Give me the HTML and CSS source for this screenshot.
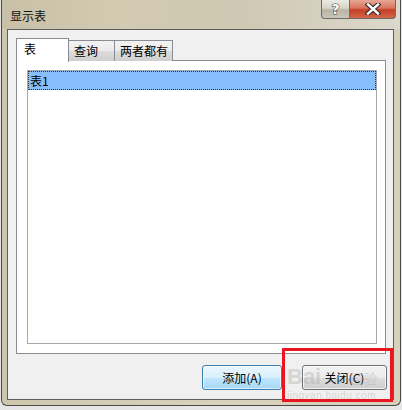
FILE: index.html
```html
<!DOCTYPE html>
<html lang="zh">
<head>
<meta charset="utf-8">
<link rel="stylesheet" href="styles.css">
</head>
<body>
<div class="window">
  <div class="titlebar">
    <span class="title">显示表</span>
    <div class="caption-buttons">
      <div class="cap help"><span>?</span></div>
      <div class="cap close">
        <svg width="16" height="12" viewBox="0 0 16 12">
          <path d="M3 1.5 L13 10.5 M13 1.5 L3 10.5" stroke="#3a2a26" stroke-width="4.6" stroke-linecap="square"/>
          <path d="M3 1.5 L13 10.5 M13 1.5 L3 10.5" stroke="#ffffff" stroke-width="2.4" stroke-linecap="square"/>
        </svg>
      </div>
    </div>
  </div>
  <div class="client">
    <div class="tabs">
      <div class="tab active">表</div>
      <div class="tab t2">查询</div>
      <div class="tab t3">两者都有</div>
    </div>
    <div class="panel">
      <div class="listbox">
        <div class="item selected">表1</div>
      </div>
    </div>
    <div class="actions">
      <button class="btn default">添加(A)</button>
      <button class="btn">关闭(C)</button>
    </div>
  </div>
</div>
<div class="watermark">
  <span class="wm-big">Bai</span><span class="wm-cn">经验</span>
  <span class="wm-small">jingyan.baidu.com</span>
</div>
<div class="annotation"></div>
</body>
</html>
```
FILE: styles.css
```css
html, body {
  margin: 0;
  padding: 0;
}
body {
  width: 402px;
  height: 410px;
  overflow: hidden;
  background: #e6e6e6;
  font-family: "Noto Sans CJK SC", "Noto Sans", sans-serif;
  font-size: 12px;
  color: #000;
  position: relative;
}
.window {
  margin-left: 1px;
  width: 398px;
  height: 405px;
  border: 1px solid #4a4a4a;
  border-top: none;
  border-radius: 0 0 6px 6px;
  background: linear-gradient(to right, #cfc7ac, #d8d1ba 50%, #d6d0bd);
  display: flex;
  flex-direction: column;
}
.titlebar {
  height: 29px;
  flex: none;
  display: flex;
  justify-content: space-between;
  align-items: flex-start;
  background: linear-gradient(to right, #c8c1a8 0%, #d2cab1 30%, #cfc8b2 60%, #dcd8cd 100%);
}
.title {
  margin-left: 8px;
  margin-top: 7px;
  line-height: 18px;
  font-size: 12px;
  color: #111;
}
.caption-buttons {
  display: flex;
  margin-right: 4px;
}
.cap {
  height: 19px;
  box-sizing: border-box;
  border: 1px solid #6d6a62;
  border-top: none;
  display: flex;
  align-items: center;
  justify-content: center;
}
.help {
  width: 28px;
  border-radius: 0 0 0 4px;
  border-right: none;
  background: linear-gradient(to bottom, #ebe9e1 0%, #d8d5ca 45%, #b8b4a6 55%, #c9c6ba 100%);
}
.help span {
  font-family: "DejaVu Sans", sans-serif;
  font-weight: bold;
  font-size: 14px;
  line-height: 14px;
  color: #fff;
  -webkit-text-stroke: 1px #3b3b3b;
  paint-order: stroke fill;
}
.close {
  width: 47px;
  border-radius: 0 0 4px 0;
  background: linear-gradient(to bottom, #e7a899 0%, #d9735d 45%, #c43f26 55%, #d3664b 100%);
}
.client {
  flex: 1;
  margin: 0 6px 5px 5px;
  border: 1px solid #5e5e5e;
  background: #f0f0f0;
  padding: 8px 6px 8px 8px;
  display: flex;
  flex-direction: column;
}
.tabs {
  display: flex;
  align-items: flex-end;
  height: 23px;
  position: relative;
  z-index: 1;
  margin-bottom: -1px;
}
.tab {
  box-sizing: border-box;
  height: 21px;
  border: 1px solid #898c95;
  border-bottom: none;
  background: linear-gradient(to bottom, #f2f2f2, #ebebeb 50%, #dddddd 51%, #cfcfcf);
  padding-left: 5px;
  line-height: 19px;
  font-size: 12px;
}
.tab + .tab { border-left: none; }
.tab.active {
  height: 24px;
  width: 53px;
  background: #fff;
  padding-left: 7px;
  line-height: 20px;
  margin-bottom: -1px;
}
.tab.t2 { width: 46px; }
.tab.t3 { width: 58px; }
.panel {
  box-sizing: border-box;
  width: 370px;
  height: 294px;
  border: 1px solid #898c95;
  background: #fff;
  padding: 9px 8px 9px 10px;
  display: flex;
}
.listbox {
  flex: 1;
  border: 1px solid #a5a7ad;
  background: #fff;
}
.item {
  height: 19px;
  box-sizing: border-box;
  line-height: 17px;
  padding-left: 1px;
  font-size: 12px;
}
.item.selected {
  background: #87bffd;
  border: 1px dotted #4b3010;
}
.actions {
  display: flex;
  justify-content: flex-end;
  gap: 20px;
  margin-top: 11px;
  padding-right: 0;
}
.btn {
  box-sizing: border-box;
  height: 25px;
  width: 80px;
  border: 1px solid #707070;
  border-radius: 3px;
  background: linear-gradient(to bottom, #f2f2f2 0%, #ebebeb 50%, #dddddd 51%, #cfcfcf 100%);
  font-family: "Noto Sans CJK SC", "Noto Sans", sans-serif;
  font-size: 12px;
  color: #000;
  padding: 0;
  box-shadow: inset 0 0 0 1px rgba(255,255,255,0.7);
}
.btn + .btn { width: 85px; }
.btn.default {
  border-color: #3c7fb1;
  background: linear-gradient(to bottom, #eaf6fd 0%, #d9f0fc 50%, #bee6fd 51%, #a7d9f5 100%);
  box-shadow: inset 0 0 0 1px rgba(255,255,255,0.6);
}
.watermark {
  position: absolute;
  left: 287px;
  top: 364px;
  width: 100px;
  color: rgba(170,170,170,0.4);
  pointer-events: none;
}
.wm-big {
  font-family: "Liberation Sans", sans-serif;
  font-weight: bold;
  font-size: 22px;
  line-height: 26px;
}
.wm-cn {
  margin-left: 28px;
  font-size: 14px;
}
.wm-small {
  display: block;
  font-family: "Liberation Sans", sans-serif;
  font-size: 10px;
  line-height: 12px;
  letter-spacing: 0.5px;
}
.annotation {
  position: absolute;
  left: 282px;
  top: 348px;
  width: 105px;
  height: 48px;
  border: 3px solid #e8161e;
  pointer-events: none;
}
```
